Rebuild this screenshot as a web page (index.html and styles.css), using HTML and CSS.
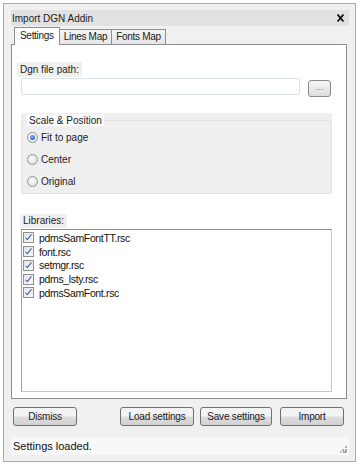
FILE: index.html
```html
<!DOCTYPE html>
<html lang="en">
<head>
  <meta charset="UTF-8" />
  <title>Import DGN Addin</title>
  <meta name="viewport" content="width=device-width, initial-scale=1.0">
  <link rel="stylesheet" href="styles.css">
</head>
<body>
  <div class="window">
    <!-- Barra de título -->
    <div class="title-bar">
      <span>Import DGN Addin</span>
      <svg class="close" width="7" height="8" viewBox="0 0 7 8">
        <path d="M0.5 0.5 L6.5 7.5 M6.5 0.5 L0.5 7.5" stroke="#111" stroke-width="1.8" fill="none"/>
      </svg>
    </div>

    <div class="tabs">
      <div class="tab active">Settings</div>
      <div class="tab">Lines Map</div>
      <div class="tab">Fonts Map</div>
    </div>

    <div class="panel">
      <div class="field-label">Dgn file path:</div>
      <div class="path-row">
        <div class="path-input"></div>
        <div class="browse">...</div>
      </div>

      <div class="group">
        <fieldset>
          <legend>Scale &amp; Position</legend>
          <div class="option"><span class="radio checked"></span>Fit to page</div>
          <div class="option"><span class="radio"></span>Center</div>
          <div class="option"><span class="radio"></span>Original</div>
        </fieldset>
      </div>

      <div class="field-label libs">Libraries:</div>
      <div class="listbox">
        <div class="item"><span class="check"></span>pdmsSamFontTT.rsc</div>
        <div class="item"><span class="check"></span>font.rsc</div>
        <div class="item"><span class="check"></span>setmgr.rsc</div>
        <div class="item"><span class="check"></span>pdms_lsty.rsc</div>
        <div class="item"><span class="check"></span>pdmsSamFont.rsc</div>
      </div>
    </div>

    <div class="buttons">
      <button class="btn btn-dismiss">Dismiss</button>
      <button class="btn btn-load">Load settings</button>
      <button class="btn btn-save">Save settings</button>
      <button class="btn btn-import">Import</button>
    </div>

    <div class="status">
      <span>Settings loaded.</span>
      <svg class="grip" width="7" height="7" viewBox="0 0 7 7">
        <rect x="5" y="0" width="2" height="2" fill="#a9a9a9"/>
        <rect x="2" y="3" width="2" height="2" fill="#a9a9a9"/>
        <rect x="5" y="3" width="2" height="2" fill="#a9a9a9"/>
        <rect x="0" y="5" width="2" height="2" fill="#bdbdbd"/>
        <rect x="3" y="5" width="2" height="2" fill="#a9a9a9"/>
        <rect x="5" y="5" width="2" height="2" fill="#a9a9a9"/>
      </svg>
    </div>
  </div>
</body>
</html>
```

FILE: styles.css
```css
body {
  margin: 0;
  background: #ffffff;
  font-family: "Liberation Sans", Arial, sans-serif;
  font-size: 10px;
  color: #1b1b1b;
}

.window {
  box-sizing: border-box;
  width: 353px;
  height: 459px;
  margin: 3px 0 0 3px;
  border: 1px solid #a9a9a9;
  background: #f0f0f0;
  padding: 6px 6px 6px 7px;
  display: flex;
  flex-direction: column;
}

.title-bar {
  height: 16px;
  background: #e1e1e1;
  display: flex;
  align-items: center;
  justify-content: space-between;
  padding: 0 5px 0 1px;
  color: #222;
}

.close {
  display: block;
}

/* Abas */
.tabs {
  display: flex;
  align-items: flex-end;
  height: 18px;
  margin-top: 1px;
  margin-bottom: -1px;
  padding-left: 3px;
  letter-spacing: -0.3px;
}

.tab {
  box-sizing: border-box;
  height: 15px;
  margin-bottom: 1px;
  padding: 0 4px;
  line-height: 14px;
  border: 1px solid #8c8e94;
  border-bottom: none;
  background: linear-gradient(#f4f4f4, #e6e6e6);
}

.tab + .tab {
  margin-left: -1px;
}

.tab.active {
  height: 18px;
  margin-bottom: 0;
  padding: 0 5px;
  line-height: 15px;
  background: #ffffff;
  position: relative;
  z-index: 1;
}

.panel {
  box-sizing: border-box;
  width: 336px;
  height: 355px;
  border: 1px solid #8c8e94;
  background: #ffffff;
}

.field-label {
  align-self: flex-start;
  display: inline-block;
  height: 15px;
  line-height: 15px;
  margin: 17px 0 0 5px;
  padding: 0 3px;
  background: #f0f0f0;
}

.path-row {
  display: flex;
  margin: 1px 0 0 9px;
}

.path-input {
  box-sizing: border-box;
  width: 279px;
  height: 17px;
  border: 1px solid #dde2e7;
  border-radius: 2px;
  background: #ffffff;
}

.browse {
  box-sizing: border-box;
  width: 23px;
  height: 17px;
  margin: 2px 0 0 8px;
  border: 1px solid #8a8a8a;
  border-radius: 3px;
  background: linear-gradient(#f6f6f6, #dddddd);
  color: #777;
  font-size: 9px;
  line-height: 12px;
  text-align: center;
}

.group {
  box-sizing: border-box;
  width: 311px;
  height: 81px;
  margin: 16px 0 0 9px;
  background: #efefef;
  padding-top: 1px;
}

.group fieldset {
  box-sizing: border-box;
  height: 80px;
  margin: 0;
  padding: 0 0 0 5px;
  border: 1px solid #dce4ea;
  border-radius: 3px;
}

.group legend {
  padding: 1px 2px 0;
  line-height: 11px;
  background: #fafafa;
}

.option {
  display: flex;
  align-items: center;
  height: 22px;
}

.radio {
  box-sizing: border-box;
  width: 11px;
  height: 11px;
  margin-right: 3px;
  border: 1px solid #939393;
  border-radius: 50%;
  background: radial-gradient(circle at 40% 40%, #fafafa, #dadada);
  position: relative;
}

.radio.checked::after {
  content: "";
  position: absolute;
  left: 2px;
  top: 2px;
  width: 5px;
  height: 5px;
  border-radius: 50%;
  background: radial-gradient(circle at 40% 35%, #6fb2f2, #1a56a0);
}

.libs {
  margin: 20px 0 0 8px;
  height: 14px;
  line-height: 14px;
}

.listbox {
  box-sizing: border-box;
  width: 311px;
  height: 163px;
  margin: 1px 0 0 9px;
  padding: 1px 0 0 1px;
  border: 1px solid #c5c7ca;
  border-top-color: #898c93;
  border-left-color: #a0a3a8;
  font-size: 10.5px;
  letter-spacing: -0.35px;
}

.item {
  display: flex;
  align-items: center;
  height: 13.75px;
  color: #111;
}

.check {
  box-sizing: border-box;
  width: 11px;
  height: 11px;
  margin-right: 5px;
  border: 1px solid #8f8f8f;
  background: linear-gradient(135deg, #e4e4e4, #fafafa);
  position: relative;
}

.check::after {
  content: "";
  position: absolute;
  left: 3px;
  top: 0px;
  width: 2px;
  height: 6px;
  border: solid #3a5bb0;
  border-width: 0 1.6px 1.6px 0;
  transform: rotate(38deg);
}

/* Botões */
.buttons {
  display: flex;
  margin-top: 8px;
  padding-left: 2px;
}

.btn {
  box-sizing: border-box;
  height: 19px;
  padding: 0;
  border: 1px solid #707070;
  border-radius: 3px;
  background: linear-gradient(#f3f3f3 45%, #dcdcdc 55%, #d2d2d2);
  font-family: "Liberation Sans", Arial, sans-serif;
  font-size: 10px;
  color: #1b1b1b;
  letter-spacing: -0.2px;
}

.btn-dismiss { width: 64px; }
.btn-load { width: 74px; margin-left: 43px; }
.btn-save { width: 72px; margin-left: 6px; }
.btn-import { width: 64px; margin-left: 8px; }

.status {
  height: 18px;
  margin-top: 11px;
  padding: 0 2px;
  background: #f8f8f8;
  display: flex;
  align-items: center;
  justify-content: space-between;
  font-size: 11px;
  color: #111;
}

.grip {
  align-self: flex-end;
  margin-bottom: 2px;
}
```
